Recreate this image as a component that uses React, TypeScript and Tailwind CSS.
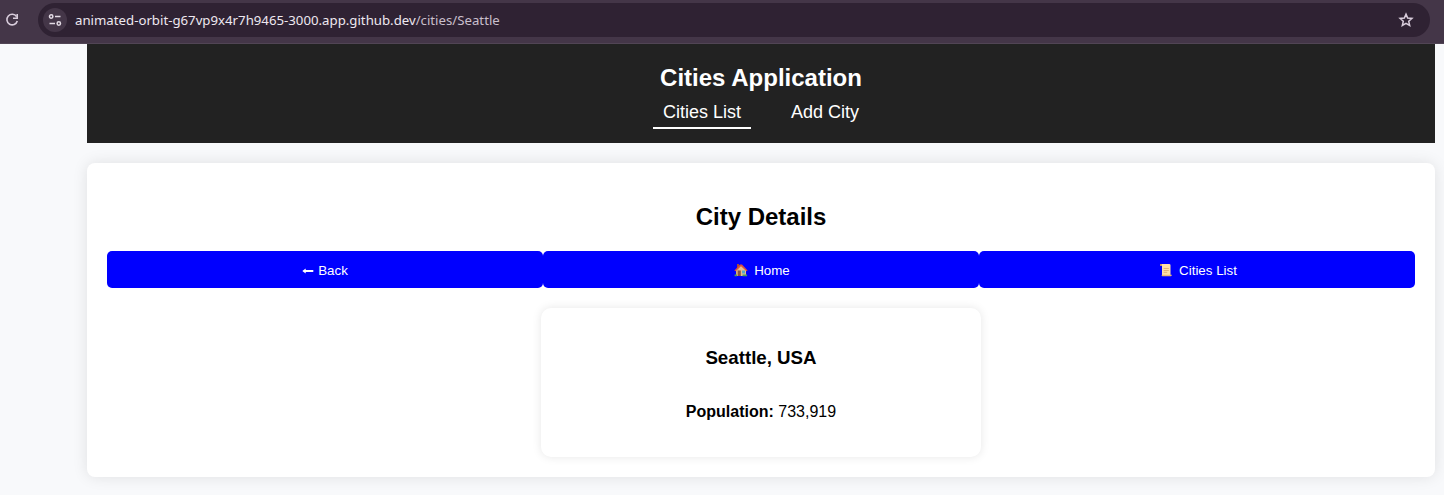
function ReloadIcon() {
  return (
    <svg className="h-4 w-4 shrink-0" viewBox="0 0 16 16" fill="none" stroke="#d9cddc" strokeWidth="1.6">
      <path d="M12.6 4.6A5.3 5.3 0 1 0 13.3 9" />
      <path d="M13.2 2v4.2H9" />
    </svg>
  );
}

function TuneIcon() {
  return (
    <svg className="h-4 w-4" viewBox="0 0 16 16" fill="none" stroke="#e3dbe5" strokeWidth="1.5">
      <circle cx="4.2" cy="4.5" r="1.7" />
      <path d="M8 4.5h5.5M2.5 11.5H8" />
      <circle cx="11.8" cy="11.5" r="1.7" />
    </svg>
  );
}

function StarIcon() {
  return (
    <svg className="h-4 w-4" viewBox="0 0 16 16" fill="none" stroke="#d9cddc" strokeWidth="1.5">
      <path d="M8 2.1l1.65 3.95 4.3.4-3.23 2.85.97 4.2L8 11.27l-3.69 2.23.97-4.2L2.05 6.45l4.3-.4z" />
    </svg>
  );
}

function House() {
  return (
    <svg className="-mt-px h-[14px] w-[14px]" viewBox="0 0 14 14">
      <path d="M3 1h2v4H3z" fill="#a34b3b" />
      <path d="M2 7L7 2l5 5v6H2z" fill="#e6bd90" />
      <path d="M2 7L4.5 4.5V13H2z" fill="#d9a87a" />
      <path d="M3.8 7.5h3V13h-3z" fill="#8a5543" />
      <path d="M8 7.5h3v3H8z" fill="#58a9c9" />
      <path d="M.4 7.4L6 1.4h2l5.6 6-1.1.8L7 3.2 1.5 8.2z" fill="#d9503f" />
      <path d="M.6 11.6h2.4v1.6H.6zM8.5 11.6h4.6v1.6H8.5z" fill="#4a9d62" />
    </svg>
  );
}

function Scroll() {
  return (
    <svg className="-mt-px h-[14px] w-[14px]" viewBox="0 0 14 14">
      <path d="M1.6 1h8.6a1.3 1.3 0 0 1 1.3 1.3V12H3V2.8H1.2z" fill="#ffe0a8" />
      <path d="M1 1.2h2v1.6H1z" fill="#d99a4e" />
      <path d="M4.6 5.5h5.2M4.6 7.5h5.2M4.6 9.3h3.6" stroke="#dfae70" strokeWidth=".9" />
      <path d="M3 11.7h9.8v.4a1.2 1.2 0 0 1-1.2 1.2H3.4a.8.8 0 0 1-.8-.8z" fill="#e9b977" />
    </svg>
  );
}

function Arrow() {
  return (
    <svg className="h-[14px] w-3" viewBox="0 0 12 14" fill="white">
      <path d="M.3 7L3.7 4.5V6h7.6v2H3.7v1.5z" />
    </svg>
  );
}

const button =
  "flex h-[37px] w-[436px] items-center justify-center rounded-[5px] bg-[#0000ff] pt-0.5 text-[13.333px] leading-[15px] text-white";

export default function App() {
  return (
    <div className="h-[495px] overflow-hidden bg-[#f8f9fb] font-['Liberation_Sans',Arial,sans-serif] text-black">
      <div className="flex h-11 items-start border-b border-[#514555] bg-[#443648] pt-[3px] pr-[14px] pl-1">
        <div className="flex h-[34px] w-[34px] shrink-0 items-center">
          <ReloadIcon />
        </div>
        <div className="flex h-[34px] flex-1 items-center rounded-full bg-[#2f2233] pr-4 pl-[5px]">
          <div className="flex h-6 w-6 items-center justify-center rounded-full bg-[#443648]">
            <TuneIcon />
          </div>
          <div className="ml-2 flex-1 font-['Noto_Sans',sans-serif] text-[13.22px] leading-[18px] whitespace-nowrap text-[#eee8f0]">
            animated-orbit-g67vp9x4r7h9465-3000.app.github.dev
            <span className="text-[#c9bfcc]">/cities/Seattle</span>
          </div>
          <StarIcon />
        </div>
      </div>

      <div className="mr-[9px] ml-[87px]">
        <header className="h-[99px] bg-[#222222] pt-5 text-center text-white">
          <h1 className="text-2xl leading-[27px] font-bold">Cities Application</h1>
          <nav className="flex justify-center gap-[30px] text-[18px] leading-5">
            <a className="border-b-2 border-white px-2.5 pt-[11px] pb-[5px]">Cities List</a>
            <a className="border-b-2 border-transparent px-2.5 pt-[11px] pb-[5px]">Add City</a>
          </nav>
        </header>

        <main className="mt-5 h-[314px] rounded-lg bg-white px-5 pt-10 text-center shadow-[0_0_15px_rgba(0,0,0,0.1)]">
          <h2 className="text-2xl leading-7 font-bold">City Details</h2>
          <div className="mt-5 flex">
            <button className={button}>
              <Arrow />
              <span className="ml-1">Back</span>
            </button>
            <button className={`${button} pl-0.5`}>
              <House />
              <span className="ml-1.5">Home</span>
            </button>
            <button className={`${button} pl-0.5`}>
              <Scroll />
              <span className="ml-1.5">Cities List</span>
            </button>
          </div>
          <section className="mx-auto mt-5 h-[149px] w-[440px] rounded-[10px] bg-white pt-[39px] shadow-[0_0_10px_rgba(0,0,0,0.1)]">
            <h3 className="text-[18.72px] leading-[21px] font-bold">Seattle, USA</h3>
            <p className="mt-[35px] text-base leading-[18px]">
              <strong>Population:</strong> 733,919
            </p>
          </section>
        </main>
      </div>
    </div>
  );
}
